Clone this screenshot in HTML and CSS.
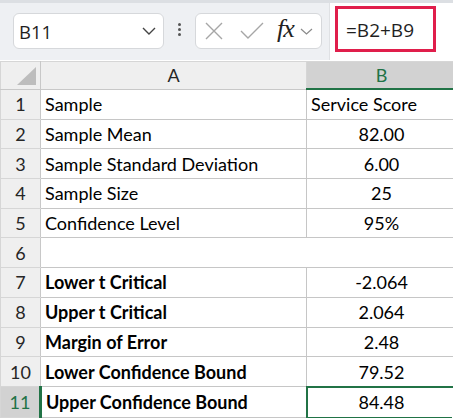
FILE: index.html
```html
<!doctype html>
<html lang="en">
  <head>
    <title>Confidence Bound</title>
    <link rel="stylesheet" href="styles.css">
  </head>
  <body>
    <div class="toolbar">
      <div class="namebox">
        <span class="name">B11</span>
        <svg class="chev" width="14" height="8" viewBox="0 0 14 8"><path d="M1 1 L7 7 L13 1" fill="none" stroke="#444" stroke-width="1.4"/></svg>
      </div>
      <div class="dots"><i></i><i></i><i></i></div>
      <div class="fxbox">
        <svg class="ico" width="18" height="18" viewBox="0 0 18 18"><path d="M1 1 L17 17 M17 1 L1 17" fill="none" stroke="#a6a6a6" stroke-width="1.4"/></svg>
        <svg class="ico check" width="24" height="18" viewBox="0 0 24 18"><path d="M1 9 L8 16 L23 1" fill="none" stroke="#a6a6a6" stroke-width="1.4"/></svg>
        <span class="fx">fx</span>
        <svg class="chev small" width="13" height="7" viewBox="0 0 13 7"><path d="M1 1 L6.5 6 L12 1" fill="none" stroke="#8a8a8a" stroke-width="1.2"/></svg>
      </div>
      <div class="formula">
        <div class="formula-text">=B2+B9</div>
      </div>
    </div>
    <table class="sheet">
      <colgroup>
        <col class="c-head">
        <col class="c-a">
        <col class="c-b">
      </colgroup>
      <thead>
        <tr>
          <th class="corner"><span class="tri"></span></th>
          <th class="colhead">A</th>
          <th class="colhead sel">B</th>
        </tr>
      </thead>
      <tbody>
        <tr><th>1</th><td class="cell">Sample</td><td class="cell left">Service Score</td></tr>
        <tr><th>2</th><td class="cell">Sample Mean</td><td class="cell num">82.00</td></tr>
        <tr><th>3</th><td class="cell">Sample Standard Deviation</td><td class="cell num">6.00</td></tr>
        <tr><th>4</th><td class="cell">Sample Size</td><td class="cell num">25</td></tr>
        <tr><th>5</th><td class="cell">Confidence Level</td><td class="cell num">95%</td></tr>
        <tr class="empty"><th>6</th><td></td><td></td></tr>
        <tr><th>7</th><td class="cell bold">Lower t Critical</td><td class="cell num">-2.064</td></tr>
        <tr><th>8</th><td class="cell bold">Upper t Critical</td><td class="cell num">2.064</td></tr>
        <tr><th>9</th><td class="cell bold">Margin of Error</td><td class="cell num">2.48</td></tr>
        <tr><th>10</th><td class="cell bold">Lower Confidence Bound</td><td class="cell num">79.52</td></tr>
        <tr><th class="selrow">11</th><td class="cell bold">Upper Confidence Bound</td><td class="cell num active">84.48<span class="handle"></span></td></tr>
      </tbody>
    </table>
  </body>
</html>
```
FILE: styles.css
```css
body {
  margin: 0;
  width: 453px;
  height: 418px;
  overflow: hidden;
  background: #ffffff;
  font-family: "Lato", "Liberation Sans", sans-serif;
}

.toolbar {
  height: 60px;
  background: #eef0f3;
  border-top: 3px solid #dcdfe3;
  box-sizing: border-box;
  display: flex;
  align-items: flex-start;
  font-family: "Open Sans", "Noto Sans", sans-serif;
}

.namebox {
  margin: 10px 0 0 13px;
  width: 151px;
  height: 36px;
  box-sizing: border-box;
  background: #fff;
  border: 1px solid #d6d8db;
  border-radius: 6px;
  display: flex;
  align-items: center;
  padding: 0 7px 0 5px;
}

.name {
  flex: 1;
  font-size: 18.5px;
  color: #1f1f1f;
}

.dots {
  margin: 20px 0 0 14px;
  width: 4px;
  display: flex;
  flex-direction: column;
  gap: 2px;
}

.dots i {
  width: 3px;
  height: 3px;
  background: #555;
  border-radius: 50%;
}

.fxbox {
  margin: 10px 0 0 13px;
  width: 127px;
  height: 36px;
  box-sizing: border-box;
  background: #fff;
  border: 1px solid #d6d8db;
  border-radius: 6px;
  display: flex;
  align-items: center;
  padding: 0 4px 0 9px;
}

.ico {
  flex: none;
}

.check {
  margin-left: 17px;
}

.fx {
  margin-left: 13px;
  font-family: "Liberation Serif", serif;
  font-style: italic;
  font-size: 26px;
  color: #222;
  letter-spacing: -1px;
  line-height: 1;
  margin-top: -4px;
}

.chev.small {
  margin-left: 6px;
}

.formula {
  margin: 0 0 0 7px;
  flex: 1;
  height: 57px;
  background: #fff;
  border-left: 1px solid #dfe1e4;
  padding: 3px 0 0 5px;
  box-sizing: border-box;
}

.formula-text {
  width: 101px;
  height: 46px;
  box-sizing: border-box;
  border: 3px solid #e01e4b;
  font-size: 19px;
  color: #1f1f1f;
  padding: 8px 0 0 8px;
}

.sheet {
  border-collapse: collapse;
  table-layout: fixed;
  width: 456px;
  margin-top: 1px;
}

.c-head { width: 40px; }
.c-a { width: 266px; }
.c-b { width: 150px; }

.sheet th {
  background: #efefef;
  font-weight: normal;
  color: #262626;
  font-size: 18px;
  border: 1px solid #d6d6d6;
  height: 28.7px;
  padding: 0;
  text-align: center;
}

.sheet thead th {
  height: 26px;
  border-bottom: 1px solid #c8c8c8;
}

.sheet .corner {
  position: relative;
  border-right: 1px solid #c8c8c8;
}

.tri {
  position: absolute;
  right: 4px;
  bottom: 4px;
  width: 0;
  height: 0;
  border-left: 19px solid transparent;
  border-bottom: 18px solid #bdbdbd;
}

.sheet .colhead.sel {
  background: #d2d2d2;
  color: #217346;
  border-bottom: 2px solid #217346;
}

.sheet tbody th {
  border-right: 1px solid #c8c8c8;
}

.sheet .selrow {
  background: #d2d2d2;
  color: #217346;
  border-right: 3px solid #217346;
}

.cell {
  border: 1px solid #c6c6c6;
  font-size: 18px;
  color: #000;
  padding: 0 4px;
  height: 28.7px;
  white-space: nowrap;
  overflow: hidden;
}

.cell.num {
  text-align: center;
}

.bold {
  font-weight: bold;
}

.empty td {
  border: none;
}

.cell.active {
  position: relative;
  border: 2px solid #217346;
  overflow: visible;
}

.handle {
  position: absolute;
  right: -4px;
  bottom: -4px;
  width: 6px;
  height: 6px;
  background: #217346;
  border: 1px solid #fff;
}
```
